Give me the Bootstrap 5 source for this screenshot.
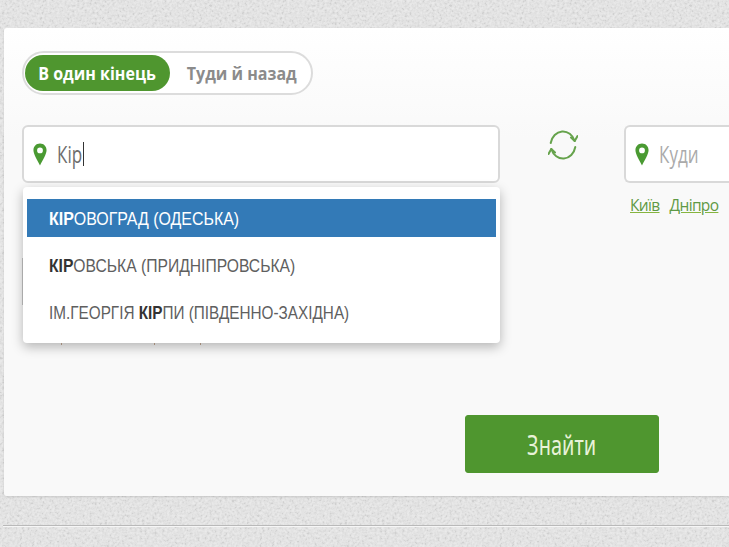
<!DOCTYPE html>
<html lang="uk">
<head>
    <meta charset="UTF-8">
    <meta name="viewport" content="width=device-width, initial-scale=1">
    <title>Пошук квитків</title>
    <link href="https://cdn.jsdelivr.net/npm/bootstrap@5.3.0/dist/css/bootstrap.min.css" rel="stylesheet">
    <style>
        html, body {
            height: 547px;
            overflow: hidden;
        }
        body {
            background-color: #e8e8e8;
            background-image: url("data:image/svg+xml,%3Csvg xmlns='http://www.w3.org/2000/svg' width='240' height='240'%3E%3Cfilter id='n'%3E%3CfeTurbulence type='fractalNoise' baseFrequency='.4' numOctaves='2'/%3E%3CfeColorMatrix values='2 0 0 0 -.5 2 0 0 0 -.5 2 0 0 0 -.5 0 0 0 0 .1'/%3E%3C/filter%3E%3Crect width='240' height='240' filter='url(%23n)'/%3E%3C/svg%3E");
            padding: 28px 0 0 4px;
        }
        .squeeze {
            display: inline-block;
            white-space: nowrap;
            transform-origin: left center;
        }
        .search-panel {
            height: 468px;
            padding: 23px 0 0 18px;
            background: linear-gradient(#fff, #f9f9f9 110px);
            border-radius: 3px 0 0 3px;
            box-shadow: 0 1px 2px rgba(0, 0, 0, .12);
            font-family: "Open Sans", sans-serif;
        }
        .trip-toggle {
            width: 291px;
            height: 44px;
            padding: 2px 1px;
            border: 2px solid #dcdcdc;
            border-radius: 22px;
            background: #fff;
            margin-bottom: 30px;
        }
        .trip-option {
            flex: none;
            height: 36px;
            padding-top: 1px;
            border-radius: 18px;
            font-size: 18px;
            font-weight: 700;
            color: #8b8b8b;
            display: flex;
            align-items: center;
            justify-content: center;
        }
        .trip-option .squeeze {
            transform: scaleX(.89);
            transform-origin: center;
        }
        .trip-option.is-on {
            width: 145px;
            background: #4f962f;
            color: #fff;
        }
        .trip-option.is-off {
            width: 140px;
            padding-left: 4px;
        }
        .field-from {
            flex: 0 0 478px;
        }
        .swap-box {
            flex: 0 0 124px;
            padding: 4px 0 0 2px;
        }
        .field-to {
            flex: 1 1 auto;
        }
        .place-box {
            height: 58px;
            border: 2px solid #d9d9d9;
            border-radius: 6px;
            background: #fff;
            padding-left: 9px;
            font-size: 23px;
            color: #6d6d6d;
        }
        .field-to .place-box {
            border-right: 0;
            border-radius: 6px 0 0 6px;
        }
        .place-box .squeeze {
            transform: scaleX(.74);
        }
        .place-box.is-empty {
            color: #aaa;
        }
        .caret-mark {
            position: absolute;
            left: 83px;
            top: 142px;
            width: 1px;
            height: 24px;
            background: #333;
        }
        .pin {
            flex: none;
            width: 14px;
            height: 23px;
            margin-right: 10px;
        }
        .quick-links {
            padding: 11px 0 0 6px;
            gap: 10px;
            font-size: 15.5px;
            letter-spacing: -.65px;
        }
        .quick-links a {
            color: #5f9a45;
            text-decoration-color: #86b53f;
        }
        .suggest-menu {
            position: absolute;
            top: 187px;
            left: 23px;
            width: 477px;
            height: 156px;
            padding: 12px 4px;
            background: #fff;
            border-radius: 4px;
            box-shadow: 0 4px 12px rgba(0, 0, 0, .28);
            font-family: "Liberation Sans", sans-serif;
            font-size: 18px;
            color: #5f5f5f;
        }
        .suggest-row {
            height: 47px;
            line-height: 41px;
            padding-left: 22px;
        }
        .suggest-row .squeeze {
            transform: scaleX(.87);
        }
        .suggest-row.is-long .squeeze {
            transform: scaleX(.85);
        }
        .suggest-row b {
            color: #333;
        }
        .suggest-row.is-active {
            height: 38px;
            line-height: 40px;
            margin-bottom: 9px;
            background: #337ab7;
            color: #fff;
        }
        .suggest-row.is-active .squeeze {
            transform: scaleX(.885);
        }
        .suggest-row.is-active b {
            color: #fff;
        }
        .under-edge {
            position: absolute;
            left: 22px;
            top: 258px;
            width: 2px;
            height: 47px;
            background: #c4c4c4;
        }
        .under-ticks {
            position: absolute;
            left: 61px;
            top: 343px;
            width: 1px;
            height: 2px;
            background: #a08a78;
            box-shadow: 93px 0 #a08a78, 139px 0 #a08a78;
        }
        .find-row {
            position: absolute;
            top: 415px;
            left: 465px;
        }
        .find-btn {
            width: 194px;
            height: 58px;
            background: #4f962f;
            border-color: #4f962f;
            color: #e8f2d8;
            font-size: 27px;
            line-height: 1;
            border-radius: 3px;
        }
        .find-btn .squeeze {
            transform: scaleX(.74);
            transform-origin: center;
        }
        .page-rule {
            position: absolute;
            top: 525px;
            left: 3px;
            right: 0;
            height: 2px;
            background: linear-gradient(#b9b9b9 50%, #f6f6f6 50%);
        }
    </style>
</head>
<body>

    <div class="search-panel">
        <div class="trip-toggle d-flex">
            <div class="trip-option is-on"><span class="squeeze">В один кінець</span></div>
            <div class="trip-option is-off"><span class="squeeze">Туди й назад</span></div>
        </div>

        <div class="d-flex">
            <div class="field-from">
                <div class="place-box d-flex align-items-center">
                    <svg class="pin" viewBox="0 0 16 25"><path fill="#4a9a32" fill-rule="evenodd" d="M8 0C3.600 0 .500 3.300.500 7.600c0 4.600 4.600 11.600 7.500 17.400 2.900-5.800 7.500-12.800 7.500-17.400C15.500 3.300 12.400 0 8 0zm0 4.500a3.300 3.300 0 1 1 0 6.600 3.300 3.300 0 0 1 0-6.600z"/></svg>
                    <span class="squeeze">Кір</span>
                </div>
            </div>
            <div class="swap-box d-flex justify-content-center">
                <svg width="30" height="32" viewBox="0 0 30 32" fill="none" stroke="#66a34c" stroke-width="2" stroke-linecap="round" stroke-linejoin="round">
                    <path d="M2.700 14A12.500 14.500 0 0 1 26.700 12"/>
                    <path d="M23 8.500l3.700 3.500 2.800-5"/>
                    <path d="M27.300 18A12.500 14.500 0 0 1 3.300 20"/>
                    <path d="M7 23.500L3.300 20 .5 25"/>
                </svg>
            </div>
            <div class="field-to">
                <div class="place-box is-empty d-flex align-items-center">
                    <svg class="pin" viewBox="0 0 16 25"><path fill="#4a9a32" fill-rule="evenodd" d="M8 0C3.600 0 .500 3.300.500 7.600c0 4.600 4.600 11.600 7.500 17.400 2.900-5.800 7.500-12.800 7.500-17.400C15.500 3.300 12.400 0 8 0zm0 4.500a3.300 3.300 0 1 1 0 6.600 3.300 3.300 0 0 1 0-6.600z"/></svg>
                    <span class="squeeze">Куди</span>
                </div>
                <div class="quick-links d-flex">
                    <a href="#">Київ</a>
                    <a href="#">Дніпро</a>
                </div>
            </div>
        </div>
    </div>

    <div class="caret-mark"></div>
    <div class="under-edge"></div>

    <div class="suggest-menu">
        <div class="suggest-row is-active"><span class="squeeze"><b>КІР</b>ОВОГРАД (ОДЕСЬКА)</span></div>
        <div class="suggest-row"><span class="squeeze"><b>КІР</b>ОВСЬКА (ПРИДНІПРОВСЬКА)</span></div>
        <div class="suggest-row is-long"><span class="squeeze">ІМ.ГЕОРГІЯ <b>КІР</b>ПИ (ПІВДЕННО-ЗАХІДНА)</span></div>
    </div>
    <div class="under-ticks"></div>

    <div class="find-row">
        <button type="button" class="btn find-btn"><span class="squeeze">Знайти</span></button>
    </div>

    <div class="page-rule"></div>

    <script src="https://cdn.jsdelivr.net/npm/bootstrap@5.3.0/dist/js/bootstrap.bundle.min.js"></script>
</body>
</html>
